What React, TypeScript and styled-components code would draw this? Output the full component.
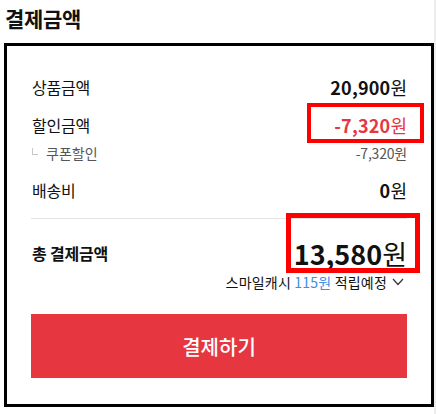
import styled, { createGlobalStyle } from 'styled-components';

const GlobalStyle = createGlobalStyle`
  *, *::before, *::after { box-sizing: border-box; }
  body {
    margin: 0;
    background: #fff;
    font-family: "Noto Sans CJK KR", "Noto Sans", sans-serif;
    color: #111;
  }
`;

const Page = styled.div`
  width: 436px;
  min-height: 414px;
  border-right: 2px solid #eeeeee;
  padding-top: 4px;
`;

const Title = styled.h2`
  margin: 0 0 11px 5px;
  font-size: 21px;
  line-height: 28px;
  font-weight: 700;
  letter-spacing: -0.3px;
`;

const Panel = styled.section`
  margin-left: 4px;
  width: 430px;
  border: 3px solid #000;
  padding: 29px 24px 26px 24px;
`;

const Row = styled.div<{ $height: number; $gap?: number }>`
  display: flex;
  align-items: center;
  justify-content: space-between;
  height: ${(p) => p.$height}px;
  margin-top: ${(p) => p.$gap ?? 0}px;
  padding-left: 1px;
`;

const Label = styled.span<{ $bold?: boolean }>`
  font-size: 16px;
  font-weight: ${(p) => (p.$bold ? 700 : 400)};
  letter-spacing: -0.2px;
`;

const SubLabel = styled.span`
  display: flex;
  align-items: center;
  gap: 8px;
  font-size: 14px;
  color: #555;
`;

const Corner = styled.i`
  display: block;
  width: 6px;
  height: 7px;
  margin-top: -3px;
  border-left: 1px solid #c8c8c8;
  border-bottom: 1px solid #c8c8c8;
`;

const Amount = styled.span<{ $size: number; $color?: string; $spacing?: number }>`
  font-size: ${(p) => p.$size}px;
  font-weight: 700;
  color: ${(p) => p.$color ?? '#111'};
  letter-spacing: ${(p) => p.$spacing ?? 0}px;
`;

const Won = styled.span`
  font-weight: 400;
  letter-spacing: 0;
`;

const SubAmount = styled.span`
  font-size: 14px;
  color: #555;
  letter-spacing: -0.2px;
`;

const Highlight = styled.span<{ $top: number; $right: number; $w: number; $h: number; $line: number }>`
  position: relative;
  display: inline-block;
  &::after {
    content: '';
    position: absolute;
    top: ${(p) => p.$top}px;
    right: ${(p) => p.$right}px;
    width: ${(p) => p.$w}px;
    height: ${(p) => p.$h}px;
    border: ${(p) => p.$line}px solid #ff0000;
    pointer-events: none;
  }
`;

const Divider = styled.hr`
  margin: 16px 0 0;
  border: 0;
  border-top: 1px solid #e4e4e4;
`;

const CashRow = styled.div`
  display: flex;
  justify-content: flex-end;
  align-items: center;
  gap: 5px;
  height: 18px;
  margin-top: 2px;
  padding-right: 3px;
  font-size: 14px;
  letter-spacing: 0.2px;
`;

const Cash = styled.span`
  color: #3c8ee6;
`;

const PayButton = styled.button`
  display: block;
  width: 100%;
  height: 64px;
  margin-top: 23px;
  border: 0;
  background: #e63741;
  color: #fff;
  font-family: inherit;
  font-size: 20px;
  font-weight: 500;
  cursor: pointer;
`;

const Chevron = () => (
  <svg width="12" height="8" viewBox="0 0 12 8" fill="none">
    <polyline points="1,1 6,6.5 11,1" stroke="#333" strokeWidth="1.2" />
  </svg>
);

const App = () => (
  <Page>
    <GlobalStyle />
    <Title>결제금액</Title>
    <Panel>
      <Row $height={24}>
        <Label>상품금액</Label>
        <Amount $size={18} $spacing={0.2}>20,900<Won>원</Won></Amount>
      </Row>
      <Row $height={24} $gap={14}>
        <Label>할인금액</Label>
        <Highlight $top={-9} $right={-17} $w={117} $h={40} $line={4}>
          <Amount $size={18} $spacing={0.2} $color="#e63741">-7,320<Won>원</Won></Amount>
        </Highlight>
      </Row>
      <Row $height={20} $gap={6}>
        <SubLabel><Corner />쿠폰할인</SubLabel>
        <SubAmount>-7,320원</SubAmount>
      </Row>
      <Row $height={24} $gap={15}>
        <Label>배송비</Label>
        <Amount $size={18} $spacing={0.2}>0<Won>원</Won></Amount>
      </Row>
      <Divider />
      <Row $height={36} $gap={16}>
        <Label $bold>총 결제금액</Label>
        <Highlight $top={-21} $right={-13} $w={134} $h={60} $line={5}>
          <Amount $size={27}>13,580<Won>원</Won></Amount>
        </Highlight>
      </Row>
      <CashRow>
        <span>스마일캐시 <Cash>115원</Cash> 적립예정</span>
        <Chevron />
      </CashRow>
      <PayButton>결제하기</PayButton>
    </Panel>
  </Page>
);

export default App;
